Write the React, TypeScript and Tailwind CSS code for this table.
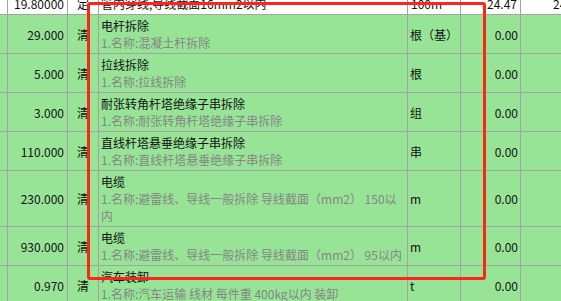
import React from "react";

type R = {
  qty: string;
  title: string;
  sub: string[];
  unit: string;
  h: string;
};

const rows: R[] = [
  { qty: "29.000", title: "电杆拆除", sub: ["1.名称:混凝土杆拆除"], unit: "根（基）", h: "h-[39px]" },
  { qty: "5.000", title: "拉线拆除", sub: ["1.名称:拉线拆除"], unit: "根", h: "h-[39px]" },
  { qty: "3.000", title: "耐张转角杆塔绝缘子串拆除", sub: ["1.名称:耐张转角杆塔绝缘子串拆除"], unit: "组", h: "h-[39px]" },
  { qty: "110.000", title: "直线杆塔悬垂绝缘子串拆除", sub: ["1.名称:直线杆塔悬垂绝缘子串拆除"], unit: "串", h: "h-[39px]" },
  { qty: "230.000", title: "电缆", sub: ["1.名称:避雷线、导线一般拆除 导线截面（mm2） 150以", "内"], unit: "m", h: "h-[56px]" },
  { qty: "930.000", title: "电缆", sub: ["1.名称:避雷线、导线一般拆除 导线截面（mm2） 95以内"], unit: "m", h: "h-[39px]" },
  { qty: "0.970", title: "汽车装卸", sub: ["1.名称:汽车运输 线材 每件重 400kg以内 装卸"], unit: "t", h: "h-[39px]" },
];

const line = "border-[#a3a3a3]";

export default function App() {
  return (
    <div
      className="relative w-[561px] h-[301px] overflow-hidden bg-[#97e497] text-[12px] text-[#111]"
      style={{ fontFamily: '"Noto Sans CJK SC", "Microsoft YaHei", sans-serif' }}
    >
      {/* partially scrolled header row */}
      <div className={`flex h-[15px] bg-white border-b ${line} overflow-hidden leading-[17px] whitespace-nowrap`}>
        <div className={`w-[8px] shrink-0 border-r ${line}`} />
        <div className={`w-[60px] shrink-0 border-r ${line} text-right pr-[3px] -mt-[5px]`}>19.80000</div>
        <div className={`w-[31px] shrink-0 border-r ${line} text-center -mt-[5px]`}>定</div>
        <div className={`w-[309px] shrink-0 border-r ${line} pl-[2px] -mt-[5px] overflow-hidden`}>管内穿线,导线截面16mm2以内</div>
        <div className={`w-[53px] shrink-0 border-r ${line} pl-[3px] -mt-[5px]`}>100m</div>
        <div className={`w-[60px] shrink-0 border-r ${line} text-right pr-[3px] -mt-[5px]`}>24.47</div>
        <div className={`w-[66px] shrink-0 border-r ${line} text-right pr-[3px] -mt-[5px]`}>24.47</div>
      </div>

      {rows.map((r, i) => (
        <div key={i} className={`flex ${r.h} border-b ${line} leading-[17px] whitespace-nowrap`}>
          <div className={`w-[8px] shrink-0 border-r ${line}`} />
          <div className={`w-[60px] shrink-0 border-r ${line} flex items-center justify-end pr-[3px]`}>{r.qty}</div>
          <div className={`w-[31px] shrink-0 border-r ${line} flex items-center justify-center`}>清</div>
          <div className={`w-[309px] shrink-0 border-r ${line} pl-[2px] pt-[2px] overflow-hidden`}>
            <div>{r.title}</div>
            {r.sub.map((s, j) => (
              <div key={j} className="text-[#858585]">{s}</div>
            ))}
          </div>
          <div className={`w-[53px] shrink-0 border-r ${line} flex items-center pl-[2px]`}>{r.unit}</div>
          <div className={`w-[60px] shrink-0 border-r ${line} flex items-center justify-end pr-[2px]`}>0.00</div>
          <div className="flex-1" />
        </div>
      ))}

      {/* red highlight box */}
      <div className="absolute left-[87px] top-[2px] w-[399px] h-[278px] border-[3px] border-[#ff2418] rounded-[3px]" />
    </div>
  );
}
